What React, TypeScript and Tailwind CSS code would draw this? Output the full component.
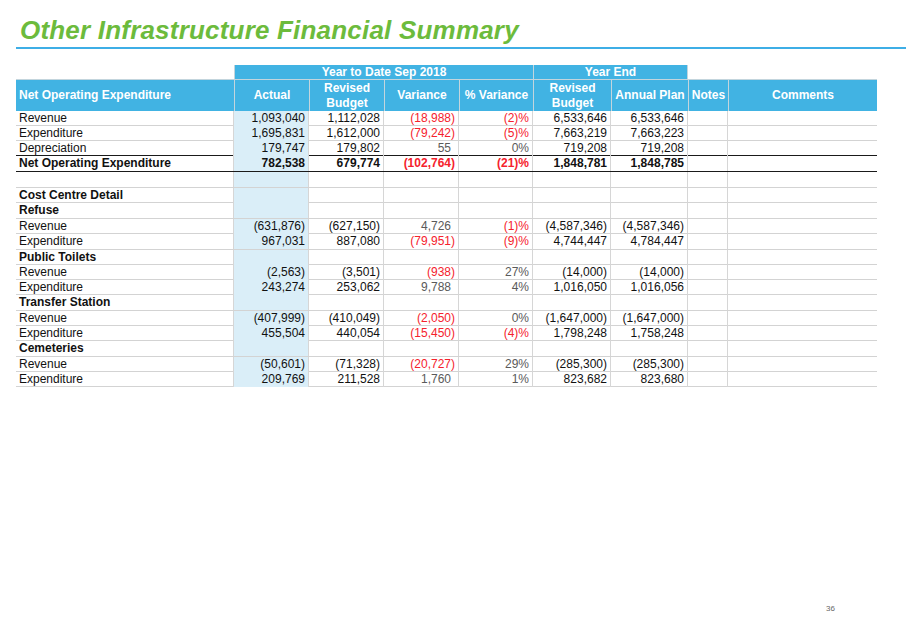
import React from "react";

const COLS = "grid grid-cols-[218px_75px_75px_75px_74px_78px_77px_40px_149px]";

type Line = {
  label: string;
  vals?: string[];
  bold?: boolean;
  h: 15 | 16;
  line?: "black";
};

const LINES: Line[] = [
  { label: "Revenue", vals: ["1,093,040", "1,112,028", "(18,988)", "(2)%", "6,533,646", "6,533,646"], h: 15 },
  { label: "Expenditure", vals: ["1,695,831", "1,612,000", "(79,242)", "(5)%", "7,663,219", "7,663,223"], h: 15 },
  { label: "Depreciation", vals: ["179,747", "179,802", "55", "0%", "719,208", "719,208"], h: 15, line: "black" },
  { label: "Net Operating Expenditure", vals: ["782,538", "679,774", "(102,764)", "(21)%", "1,848,781", "1,848,785"], bold: true, h: 16, line: "black" },
  { label: "", h: 16 },
  { label: "Cost Centre Detail", bold: true, h: 15 },
  { label: "Refuse", bold: true, h: 16 },
  { label: "Revenue", vals: ["(631,876)", "(627,150)", "4,726", "(1)%", "(4,587,346)", "(4,587,346)"], h: 15 },
  { label: "Expenditure", vals: ["967,031", "887,080", "(79,951)", "(9)%", "4,744,447", "4,784,447"], h: 16 },
  { label: "Public Toilets", bold: true, h: 15 },
  { label: "Revenue", vals: ["(2,563)", "(3,501)", "(938)", "27%", "(14,000)", "(14,000)"], h: 15 },
  { label: "Expenditure", vals: ["243,274", "253,062", "9,788", "4%", "1,016,050", "1,016,056"], h: 15 },
  { label: "Transfer Station", bold: true, h: 16 },
  { label: "Revenue", vals: ["(407,999)", "(410,049)", "(2,050)", "0%", "(1,647,000)", "(1,647,000)"], h: 15 },
  { label: "Expenditure", vals: ["455,504", "440,054", "(15,450)", "(4)%", "1,798,248", "1,758,248"], h: 15 },
  { label: "Cemeteries", bold: true, h: 16 },
  { label: "Revenue", vals: ["(50,601)", "(71,328)", "(20,727)", "29%", "(285,300)", "(285,300)"], h: 15 },
  { label: "Expenditure", vals: ["209,769", "211,528", "1,760", "1%", "823,682", "823,680"], h: 15 },
];

function numClass(i: number, v: string) {
  // variance columns: red when negative, grey otherwise
  if (i === 2 || i === 3) {
    const neg = v.startsWith("(");
    const pad = i === 2 && !neg ? "pr-[7px]" : "pr-[3px]";
    return `${neg ? "text-[#f5222d]" : "text-[#5a5a5a]"} ${pad}`;
  }
  return "text-[#111] pr-[3px]";
}

function BodyRow({ r }: { r: Line }) {
  const cell = "flex items-center border-r border-[#d6d6d6]";
  return (
    <div
      className={`${COLS} ${r.h === 16 ? "h-[16px]" : "h-[15px]"} border-b ${
        r.line === "black" ? "border-[#1a1a1a]" : "border-[#d3d3d3]"
      } ${r.bold ? "font-bold" : ""}`}
    >
      <div className={`${cell} pl-[3px] text-[#111]`}>{r.label}</div>
      {[0, 1, 2, 3, 4, 5].map((i) => {
        const v = r.vals ? r.vals[i] : "";
        return (
          <div
            key={i}
            className={`${cell} justify-end ${i === 0 ? "bg-[#daeef8]" : ""} ${v ? numClass(i, v) : ""}`}
          >
            {v}
          </div>
        );
      })}
      <div className={cell} />
      <div />
    </div>
  );
}

export default function App() {
  const hd = "flex items-center justify-center text-center bg-[#41b3e3] text-white font-bold border-l border-[#c3d5dd]";
  return (
    <div className="w-[906px] h-[635px] bg-white flex flex-col font-['Liberation_Sans',Arial,sans-serif] text-[12px] leading-[15px]">
      <div className="pt-[16px] pl-[20px] text-[26px] leading-[28px] font-bold italic text-[#6cbb3c] tracking-[0.2px]">
        Other Infrastructure Financial Summary
      </div>
      <div className="ml-[16px] mt-[3px] h-[2px] bg-[#3eaee6]" />

      <div className="ml-[16px] mt-[16px] w-[861px]">
        {/* header band */}
        <div className={`${COLS} h-[14px] leading-[14px]`}>
          <div />
          <div className={`${hd} col-span-4`}>Year to Date Sep 2018</div>
          <div className={`${hd} col-span-2 border-r`}>Year End</div>
          <div />
          <div />
        </div>
        <div className={`${COLS} h-[32px] border-t border-[#c3d5dd]`}>
          <div className="flex items-center bg-[#41b3e3] text-white font-bold pl-[3px]">Net Operating Expenditure</div>
          <div className={hd}>Actual</div>
          <div className={hd}>
            Revised
            <br />
            Budget
          </div>
          <div className={hd}>Variance</div>
          <div className={hd}>% Variance</div>
          <div className={hd}>
            Revised
            <br />
            Budget
          </div>
          <div className={hd}>Annual Plan</div>
          <div className={hd}>Notes</div>
          <div className={hd}>Comments</div>
        </div>

        {LINES.map((r, i) => (
          <BodyRow key={i} r={r} />
        ))}
      </div>

      <div className="mt-auto pb-[21px] pl-[826px] text-[8px] leading-[10px] text-[#666]">36</div>
    </div>
  );
}
